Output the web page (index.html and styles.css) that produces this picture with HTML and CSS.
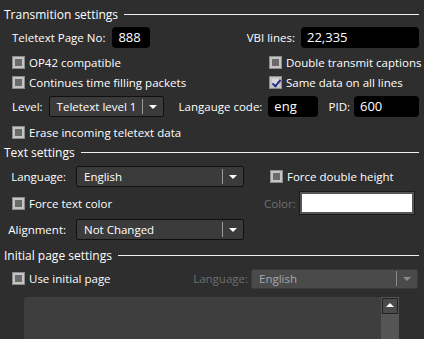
FILE: index.html
```html
<!DOCTYPE html>
<html lang="en">

<head>
    <meta charset="UTF-8">
    <title>Teletext settings</title>
    <link rel="stylesheet" href="styles.css">
</head>

<body>

    <div class="panel">
        <div class="group-title"><span>Transmition settings</span><div class="rule"></div></div>

        <div class="row row-page">
            <span class="label">Teletext Page No:</span>
            <div class="field page-no">888</div>
            <span class="label vbi-label">VBI lines:</span>
            <div class="field vbi">22,335</div>
        </div>

        <div class="two-col">
            <label class="check"><span class="box"></span>OP42 compatible</label>
            <label class="check"><span class="box"></span>Double transmit captions</label>
            <label class="check"><span class="box"></span>Continues time filling packets</label>
            <label class="check"><span class="box checked"></span>Same data on all lines</label>
        </div>

        <div class="row row-level">
            <span class="label">Level:</span>
            <div class="combo level"><span class="combo-text">Teletext level 1</span><span class="combo-btn"></span></div>
            <span class="label lang-code">Langauge code:</span>
            <div class="field eng">eng</div>
            <span class="label pid-label">PID:</span>
            <div class="field pid">600</div>
        </div>

        <label class="check erase"><span class="box"></span>Erase incoming teletext data</label>

        <div class="group-title"><span>Text settings</span><div class="rule"></div></div>

        <div class="text-grid">
            <span class="label right">Language:</span>
            <div class="combo"><span class="combo-text">English</span><span class="combo-btn"></span></div>
            <label class="check"><span class="box"></span>Force double height</label>

            <label class="check span2"><span class="box"></span>Force text color</label>
            <div class="color-cell">
                <span class="label muted">Color:</span>
                <div class="swatch"></div>
            </div>

            <span class="label right">Alignment:</span>
            <div class="combo"><span class="combo-text">Not Changed</span><span class="combo-btn"></span></div>
            <div></div>
        </div>

        <div class="group-title"><span>Initial page settings</span><div class="rule"></div></div>

        <div class="row row-initial">
            <label class="check"><span class="box"></span>Use initial page</label>
            <span class="label muted init-lang">Language:</span>
            <div class="combo disabled"><span class="combo-text">English</span><span class="combo-btn"></span></div>
        </div>

        <div class="listbox">
            <div class="scrollbar">
                <div class="scroll-up"></div>
            </div>
        </div>
    </div>

</body>

</html>
```

FILE: styles.css
```css
body {
    margin: 0;
    background: #2e2e2e;
    color: #ffffff;
    font-family: "Open Sans", "Noto Sans", sans-serif;
    font-size: 11.5px;
    overflow: hidden;
    height: 339px;
}

.panel {
    padding: 6px 5px 0 4px;
}

.group-title {
    display: flex;
    align-items: center;
    gap: 6px;
    height: 16px;
    font-size: 12px;
}

.rule {
    flex: 1;
    height: 1px;
    background: #f0f0f0;
}

.label {
    white-space: nowrap;
}

.muted {
    color: #6f6f6f;
}

.row {
    display: flex;
    align-items: center;
}

.row-page {
    height: 22px;
    margin-top: 4px;
    padding-left: 8px;
}

.field {
    background: #000;
    border-radius: 4px;
    height: 21px;
    line-height: 21px;
    padding-left: 6px;
    font-size: 13px;
    box-sizing: border-box;
}

.page-no {
    width: 38px;
    margin-left: 7px;
}

.vbi-label {
    margin-left: auto;
}

.vbi {
    width: 118px;
    margin-left: 6px;
}

.two-col {
    display: grid;
    grid-template-columns: 257px 1fr;
    padding-left: 8px;
    margin-top: 4px;
}

.check {
    display: flex;
    align-items: center;
    gap: 4px;
    height: 20px;
    white-space: nowrap;
}

.box {
    width: 13px;
    height: 13px;
    box-sizing: border-box;
    border: 1px solid #8c8c8c;
    background: #6a6a6a;
    box-shadow: inset 0 0 0 2px #c4c4c4;
    position: relative;
    flex: none;
}

.box.checked {
    background: #d8d8d8;
}

.box.checked::after {
    content: "";
    position: absolute;
    left: 4px;
    top: 1px;
    width: 3px;
    height: 7px;
    border: solid #2a2f8a;
    border-width: 0 2px 2px 0;
    transform: rotate(40deg);
}

.row-level {
    height: 21px;
    margin-top: 4px;
    padding-left: 8px;
}

.combo {
    display: flex;
    align-items: center;
    height: 21px;
    box-sizing: border-box;
    border: 1px solid #101010;
    border-radius: 2px;
    background: #3b3b3b;
    font-size: 11.5px;
}

.combo-text {
    flex: 1;
    padding-left: 7px;
    white-space: nowrap;
    overflow: hidden;
}

.combo-btn {
    width: 20px;
    height: 15px;
    border-left: 1px solid #9a9a9a;
    position: relative;
    flex: none;
}

.combo-btn::after {
    content: "";
    position: absolute;
    left: 6px;
    top: 6px;
    border-left: 4px solid transparent;
    border-right: 4px solid transparent;
    border-top: 4px solid #ffffff;
}

.level {
    width: 115px;
    margin-left: 6px;
}

.lang-code {
    margin-left: 15px;
}

.eng {
    width: 50px;
    margin-left: 6px;
}

.pid-label {
    margin-left: auto;
}

.pid {
    width: 65px;
    margin-left: 4px;
}

.erase {
    padding-left: 8px;
    margin-top: 5px;
    margin-bottom: 2px;
}

.text-grid {
    display: grid;
    grid-template-columns: 62px 168px 1fr;
    column-gap: 10px;
    row-gap: 5px;
    align-items: center;
    margin-top: 6px;
}

.text-grid > .check:nth-child(3) {
    padding-left: 16px;
}

.right {
    text-align: right;
}

.span2 {
    grid-column: span 2;
    padding-left: 8px;
}

.color-cell {
    display: flex;
    align-items: center;
    gap: 4px;
    padding-left: 10px;
}

.swatch {
    width: 114px;
    height: 22px;
    box-sizing: border-box;
    background: #ffffff;
    border: 2px solid #555555;
    outline: 1px solid #1a1a1a;
}

.text-grid + .group-title {
    margin-top: 7px;
}

.row-initial {
    height: 21px;
    margin-top: 5px;
    padding-left: 8px;
}

.init-lang {
    margin-left: auto;
}

.combo.disabled {
    width: 167px;
    height: 20px;
    margin-left: 3px;
    margin-right: 1px;
    background: #4a4a4a;
    border-color: #3a3a3a;
    color: #a8a8a8;
}

.combo.disabled .combo-btn {
    border-left-color: #8a8a8a;
}

.combo.disabled .combo-btn::after {
    border-top-color: #8a8a8a;
}

.listbox {
    margin: 8px 0 0 20px;
    width: 375px;
    height: 44px;
    background: #3e3e3e;
    border-radius: 3px 0 0 0;
    display: flex;
    justify-content: flex-end;
}

.scrollbar {
    width: 18px;
    background: #555555;
}

.scroll-up {
    width: 16px;
    height: 16px;
    margin: 1px 1px 0;
    box-sizing: border-box;
    border: 1px solid #222;
    background: #4a4a4a;
    position: relative;
}

.scroll-up::after {
    content: "";
    position: absolute;
    left: 3px;
    top: 4px;
    border-left: 4px solid transparent;
    border-right: 4px solid transparent;
    border-bottom: 4px solid #ffffff;
}
```
